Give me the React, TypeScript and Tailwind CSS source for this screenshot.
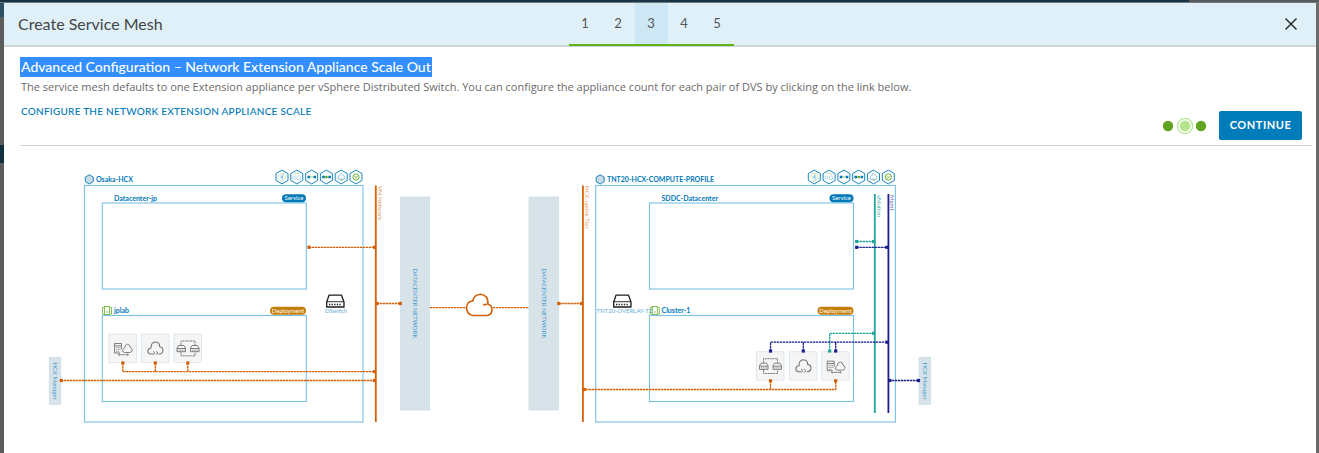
import React from "react";

const ORANGE = "#d45f07";
const BLUE = "#0079b8";
const SKY = "#79c0e4";
const NAVY = "#1a1f8c";
const TEAL = "#22a699";

function Wire({ d, color }: { d: string; color: string }) {
  return <path d={d} fill="none" stroke={color} strokeWidth="1.3" strokeDasharray="2.4 .6" />;
}

function Pin({ x, y, color }: { x: number; y: number; color: string }) {
  return <rect x={x - 1.6} y={y - 1.6} width="3.2" height="3.2" fill={color} />;
}

function Hexagon({ x, y, r, fill = "#fff" }: { x: number; y: number; r: number; fill?: string }) {
  const w = r * 0.87;
  return (
    <path
      d={`M${x} ${y - r}L${x + w} ${y - r / 2}V${y + r / 2}L${x} ${y + r}L${x - w} ${y + r / 2}V${y - r / 2}Z`}
      fill={fill}
      stroke={BLUE}
      strokeWidth="0.9"
      strokeLinejoin="round"
    />
  );
}

function ServiceIcons({ x, y }: { x: number; y: number }) {
  const step = 14.8;
  return (
    <g transform={`translate(${x} ${y})`}>
      {[0, 1, 2, 3, 4, 5].map((i) => (
        <Hexagon key={i} x={i * step} y={0} r={6.9} />
      ))}
      <g fill="none" strokeWidth="0.6">
        <circle r="3.8" stroke="#9ccc65" strokeDasharray="2 1" />
        <path d="M-2 0H2M0-3V3M0-3L1.6-1.5L-1.3 1.2M0 3L1.6 1.5L-1.3-1.2" stroke="#7dbcdc" />
        <path d="M11-1.5V2.5M13-1.5V2.5M15 2.5V0L16.5-1.5L18.3 0V2.5H15" stroke="#7fbcdb" />
        <path d="M12-3.2Q15-4.5 17.5-3" stroke="#9ccc65" />
        <path d="M27 0H32M42 0H47" stroke="#62a420" />
        <path d="M56.2 2.2Q55-.5 57-1L59.2-3.7L61.7-1.2Q63.7 0 62 2.2Z" stroke="#3b9acb" />
        <path d="M58 3.2H61" stroke="#62a420" />
      </g>
      <g fill="none" stroke="#62a420" strokeWidth="0.9">
        <circle cx="74" r="3.1" />
        <path d="M72-1.2L74 .6L76-1.2M72.8 1.6L75.2-.4" strokeWidth="0.6" />
      </g>
      <path d="M25.5-1.3H28V1.3H25.5ZM31.5-1.3H34V1.3H31.5ZM40.2-1.3H42.7V1.3H40.2ZM46.4-1.3H48.9V1.3H46.4Z" fill={BLUE} />
      <circle cx="44.4" r="1.3" fill="#62a420" />
    </g>
  );
}

function Badge({ right, y, width, color, label }: { right: number; y: number; width: number; color: string; label: string }) {
  return (
    <g>
      <rect x={right - width} y={y - 4} width={width} height="8" rx="4" fill={color} />
      <text x={right - width / 2} y={y + 2} textAnchor="middle" fontSize="6" fill="#fff">{label}</text>
    </g>
  );
}

function ClusterIcon({ x, y }: { x: number; y: number }) {
  return (
    <g transform={`translate(${x} ${y})`} fill="none" stroke="#78b944" strokeWidth="0.9">
      <path d="M2 1.5H0V8H2M7 1.5H9V8H7" />
      <rect x="2" y="0.5" width="5" height="8" />
      <path d="M4.5 5V7" />
    </g>
  );
}

function SwitchIcon({ x, y }: { x: number; y: number }) {
  return (
    <g transform={`translate(${x} ${y})`} fill="none" stroke="#1d1d1d">
      <path d="M3 .7H15.5L18 7.5V12.5H.7V7.5Z" strokeWidth="1.3" strokeLinejoin="round" />
      <path d="M1 7.2H18" strokeWidth="0.9" />
      <path d="M3 10H16" strokeWidth="1.5" strokeDasharray="1.3 1.3" />
    </g>
  );
}

function Tile({ x, y, kind }: { x: number; y: number; kind: "host" | "cloud" | "extension" }) {
  return (
    <g transform={`translate(${x} ${y})`}>
      <rect x="0.5" y="0.5" width="27.5" height="28.5" fill="#f5f5f5" stroke="#c8d8ec" strokeWidth="0.9" strokeDasharray="1.5 1" />
      <g fill="none" stroke="#737373" strokeWidth="0.9" strokeLinejoin="round">
        {kind === "host" && (
          <>
            <path d="M6 19.5V10H13V15.5M6 12.3H13" />
            <path d="M7.5 14.2H12M7.5 16.2H12M7.5 18.2H11" strokeWidth="0.8" strokeDasharray="1.2 .5" />
            <path d="M6 19.5H11.5" />
            <path d="M16 19Q13.3 18.4 14.3 16Q15 14.6 16.2 14.5Q16.4 11 19 10.8Q21.6 11 21.8 14Q24 14.5 23.7 17Q23.2 19 21 19Z" fill="#f5f5f5" />
            <path d="M10 21.2H20M11.3 20.2L10 21.2L11.3 22.2M18.7 20.2L20 21.2L18.7 22.2" strokeWidth="0.8" />
          </>
        )}
        {kind === "cloud" && (
          <>
            <path d="M12 20.5H9.5Q6.5 20 7 16.8Q7.6 14.5 10 14.5Q9.8 9 14.3 8.5Q18.8 8.7 18.7 13.2Q21.8 13.5 22 17Q21.5 20.5 18.5 20.5H17.5" strokeWidth="1.1" />
            <path d="M12 17.7L14 19.5L12 21.3M15 17.7L17 19.5L15 21.3" />
          </>
        )}
        {kind === "extension" && (
          <>
            <path d="M3.5 14.5L5 12H10.5L12 14.5V18.2H3.5ZM3.5 15H12M17 14.5L18.5 12H24L25.5 14.5V18.2H17ZM17 15H25.5" />
            <path d="M5 16.7H11M18.5 16.7H24.5" strokeDasharray="1 .8" />
            <path d="M7.5 11.5V7.5H21.5V11.5M7.5 18.8V22.3H21.5V18.8" strokeDasharray="2 .6" />
          </>
        )}
      </g>
    </g>
  );
}

function VerticalText({ x, y, color, size = 6, anchor = "start", children }: { x: number; y: number; color: string; size?: number; anchor?: "start" | "middle"; children: string }) {
  return (
    <text transform={`translate(${x} ${y}) rotate(90)`} fontSize={size} fill={color} textAnchor={anchor}>
      {children}
    </text>
  );
}

function Topology() {
  return (
    <svg viewBox="40 165 900 265" width="900" height="265" className="block shrink-0" role="img" aria-label="Service mesh topology" fontFamily="Lato, sans-serif">
      {/* Source site */}
      <g fill="none" stroke={SKY} strokeWidth="1.1">
        <rect x="84.5" y="185.5" width="278.5" height="236.5" />
        <rect x="102.3" y="203" width="204" height="86" />
        <rect x="102.3" y="315.5" width="204" height="86" />
      </g>
      <Hexagon x={89.3} y={179.4} r={4.6} fill="#c8dbe6" />
      <ServiceIcons x={282} y={177} />
      <g fontSize="7" fontWeight="700" fill={BLUE}>
        <text x="96" y="182">Osaka-HCX</text>
        <text x="114" y="200.5">Datacenter-jp</text>
        <text x="114" y="312.5">jplab</text>
        <text x="607" y="182">TNT20-HCX-COMPUTE-PROFILE</text>
        <text x="661.5" y="200.5">SDDC-Datacenter</text>
        <text x="661.5" y="312.5">Cluster-1</text>
      </g>
      <Badge right={306} y={198.3} width={24} color={BLUE} label="Service" />
      <Badge right={306} y={310.7} width={36} color="#c47d05" label="Deployment" />
      <ClusterIcon x={102.5} y={306} />
      <SwitchIcon x={326} y={294.5} />
      <text x="336" y="313" fontSize="6" textAnchor="middle" fill="#65add6">DSwitch</text>
      <Tile x={108.5} y={333.5} kind="host" />
      <Tile x={141} y={333.5} kind="cloud" />
      <Tile x={173.5} y={333.5} kind="extension" />

      {/* Datacenter networks */}
      <g fill="#d8e3e9" stroke="#c5dce8" strokeWidth="0.7">
        <rect x="400.3" y="197" width="29.4" height="213" />
        <rect x="529" y="197" width="29.4" height="213" />
        <rect x="49.3" y="357.3" width="11.5" height="47" />
        <rect x="919" y="357.3" width="11.5" height="47" />
      </g>
      <VerticalText x={413} y={303.5} color="#3f9dce" anchor="middle">DATACENTER NETWORK</VerticalText>
      <VerticalText x={541.5} y={303.5} color="#3f9dce" anchor="middle">DATACENTER NETWORK</VerticalText>
      <VerticalText x={53} y={381} color="#3f9dce" anchor="middle">HCX Manager</VerticalText>
      <VerticalText x={922.7} y={381} color="#3f9dce" anchor="middle">HCX Manager</VerticalText>

      {/* Destination site */}
      <g fill="none" stroke={SKY} strokeWidth="1.1">
        <rect x="595.7" y="185.5" width="299.7" height="236.5" />
        <rect x="649.5" y="203" width="204" height="86" />
        <rect x="649.5" y="315.5" width="204" height="86" />
      </g>
      <Hexagon x={600.2} y={179.4} r={4.6} fill="#c8dbe6" />
      <ServiceIcons x={814.3} y={177} />
      <Badge right={853.5} y={198.3} width={24} color={BLUE} label="Service" />
      <Badge right={853.5} y={310.7} width={36} color="#c47d05" label="Deployment" />
      <ClusterIcon x={650.3} y={306} />
      <SwitchIcon x={613} y={294.5} />
      <text x="596.5" y="313" fontSize="6" fill="#65add6">TNT20-OVERLAY-TZ</text>
      <Tile x={756} y={351.2} kind="extension" />
      <Tile x={789} y={351.2} kind="cloud" />
      <Tile x={821.2} y={351.2} kind="host" />

      {/* Network backbones */}
      <g fill="none" strokeWidth="1.8">
        <path d="M375.8 185.5V422M582.9 185.5V422" stroke={ORANGE} />
        <path d="M874.8 194V413" stroke={TEAL} />
        <path d="M888.4 194V413" stroke={NAVY} />
      </g>
      <VerticalText x={378} y={186} color="#e59962">VM Network</VerticalText>
      <VerticalText x={585} y={186} color="#e59962">HCX-uplink-Tier</VerticalText>
      <VerticalText x={876.5} y={195} color="#52b8ae">vMotion</VerticalText>
      <VerticalText x={890} y={195} color="#7475b5">Mgmt</VerticalText>

      <Wire color={ORANGE} d="M309 247.3H375M377 303.5H400M429.7 307.7H467M493 307.7H529M558.4 303.5H582M122.8 363V371.7H375M155.3 363V371.7M187.8 363V371.7M61 380.5H375M583 389.5H835.7V381M770.5 381V389.5" />
      {[[309, 247.3], [374.5, 247.3], [377, 303.5], [400.3, 303.5], [558.8, 303.5], [581.7, 303.5], [122.8, 363], [155.3, 363], [187.8, 363], [374.5, 371.7], [374.5, 380.5], [61.3, 380.5], [584.3, 389.5], [770.5, 380.8], [835.7, 380.8]].map(([x, y]) => (
        <Pin key={`${x}-${y}`} x={x} y={y} color={ORANGE} />
      ))}
      <path d="M473 315.5H487Q492.3 314.8 492 309Q491.5 305 488 304.3Q488.3 294.8 480.5 294.2Q474 294.6 472.8 301Q467 301.2 466.5 307.5Q466.7 314.5 473 315.5ZM487 304.3Q484.8 304.3 483.2 305.2" fill="#fff" stroke={ORANGE} strokeWidth="1.6" strokeLinejoin="round" />

      <Wire color={TEAL} d="M856.5 241.5H874M829.7 351V333.3H874" />
      {[[856.7, 241.5], [873.5, 241.5], [829.7, 351], [873.5, 333.3]].map(([x, y]) => (
        <Pin key={`${x}-${y}`} x={x} y={y} color={TEAL} />
      ))}
      <Wire color={NAVY} d="M856.5 247.3H888M770.5 351V342.2H888M803.3 351V342.2M835.7 351V342.2M889 380.5H918" />
      {[[856.7, 247.3], [887, 247.3], [770.5, 351], [803.3, 351], [835.7, 351], [887, 342.2], [889.7, 380.5], [918.5, 380.5]].map(([x, y]) => (
        <Pin key={`${x}-${y}`} x={x} y={y} color={NAVY} />
      ))}
    </svg>
  );
}

export default function App() {
  return (
    <div className="flex h-screen flex-col overflow-hidden bg-[#6b6b6b] font-['Lato',sans-serif]">
      <div className="flex h-[3px] shrink-0 border-b border-[#777]">
        <div className="flex-1 bg-[#183448]" />
        <div className="w-[130px] bg-[#565b60]" />
      </div>
      <div className="flex min-h-0 flex-1">
        <div className="flex w-1 shrink-0 flex-col bg-[#5c5c5c]">
          <div className="h-[14px] bg-[#2d5069]" />
          <div className="mt-32 h-[18px] bg-[#12303f]" />
        </div>
        <main className="mr-[3px] flex min-w-0 flex-1 flex-col overflow-hidden bg-white">
          <header className="grid h-11 shrink-0 grid-cols-[1fr_auto_1fr] border-b-2 border-[#cfd4d7] bg-[#dff0f8] pr-[18px]">
            <h1 className="self-center pl-3.5 text-base leading-5 text-[#454545]">Create Service Mesh</h1>
            <nav aria-label="Steps" className="-mb-px flex border-b-2 border-[#60b515]">
              {[1, 2, 3, 4, 5].map((step) => (
                <button
                  key={step}
                  aria-current={step === 3 ? "step" : undefined}
                  className={`w-[33px] text-[13px] text-[#565656] ${step === 3 ? "bg-[#cde7f4]" : ""}`}
                >
                  {step}
                </button>
              ))}
            </nav>
            <button aria-label="Close" className="self-center justify-self-end">
              <svg width="14" height="14" viewBox="0 0 14 14" className="block" fill="none" stroke="#222" strokeWidth="1.4">
                <path d="M1.5 1.5L12.5 12.5M12.5 1.5L1.5 12.5" />
              </svg>
            </button>
          </header>
          <section className="mr-1 ml-4 shrink-0 border-b border-[#d3d3d3] pt-2.5">
            <h2 className="w-fit bg-[#338fff] px-px text-sm leading-5 font-medium text-white">Advanced Configuration – Network Extension Appliance Scale Out</h2>
            <p className="pl-px font-['Open_Sans',sans-serif] text-[11px] leading-5 text-[#6a6a6a]">
              The service mesh defaults to one Extension appliance per vSphere Distributed Switch. You can configure the appliance count for each pair of DVS by clicking on the link below.
            </p>
            <div className="flex h-12 justify-between">
              <a href="#scale" className="mt-1 pl-px text-[10px] leading-5 font-medium tracking-wide text-[#0079b8]">CONFIGURE THE NETWORK EXTENSION APPLIANCE SCALE</a>
              <div className="mt-3.5 mr-2.5 flex items-start gap-3">
                <svg width="46" height="30" viewBox="0 0 46 30" aria-hidden="true">
                  <circle cx="7" cy="15" r="5.2" fill="#62a420" />
                  <circle cx="24" cy="15" r="7.6" fill="#fff" stroke="#b5e58d" strokeWidth="1.3" />
                  <circle cx="24" cy="15" r="5.4" fill="#b5e58d" />
                  <circle cx="40" cy="15" r="5.2" fill="#62a420" />
                </svg>
                <button className="h-[29px] w-[83px] rounded-[2px] bg-[#007cbb] text-[11px] font-bold tracking-wider text-white">CONTINUE</button>
              </div>
            </div>
          </section>
          <div className="mt-[19px] ml-9">
            <Topology />
          </div>
        </main>
      </div>
    </div>
  );
}
